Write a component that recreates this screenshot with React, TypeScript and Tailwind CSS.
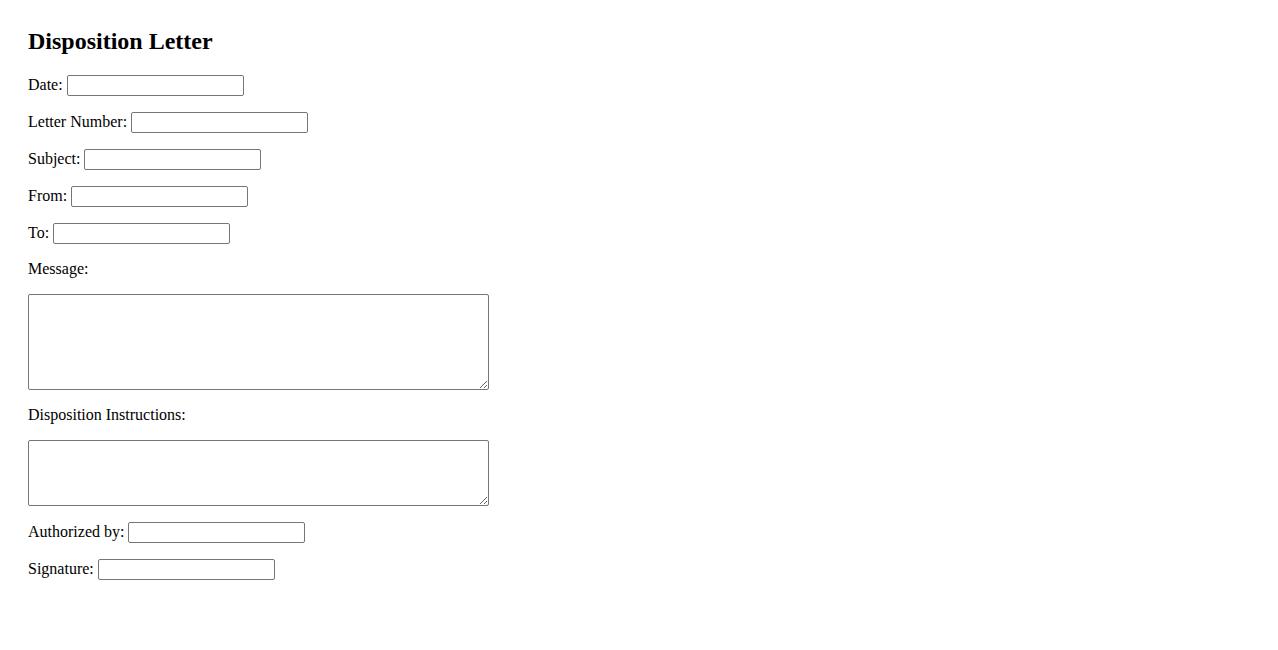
const serif = { fontFamily: '"Liberation Serif", "Times New Roman", serif' };

function Field({ label }: { label: string }) {
  return (
    <div className="flex h-[21px] items-center gap-[4px] text-[16px] text-black">
      <span className="pb-[2px] leading-[18px]">{label}</span>
      <input
        type="text"
        className="h-[21px] w-[177px] rounded-[2px] border border-[#767676] bg-white px-[2px] text-[13px] outline-none"
      />
    </div>
  );
}

function AreaField({ label, height }: { label: string; height: string }) {
  return (
    <>
      <div className="h-[18px] text-[16px] leading-[18px] text-black">{label}</div>
      <textarea
        className={`block w-[461px] ${height} rounded-[2px] border border-[#767676] bg-white p-[2px] text-[13px] outline-none`}
      />
    </>
  );
}

export default function App() {
  return (
    <div className="min-h-screen bg-white pl-[28px] pt-[28px]" style={serif}>
      <h2 className="h-[27px] text-[24px] font-bold leading-[27px] text-black">Disposition Letter</h2>
      <div className="mt-[20px] flex flex-col gap-[16px]">
        <Field label="Date:" />
        <Field label="Letter Number:" />
        <Field label="Subject:" />
        <Field label="From:" />
        <Field label="To:" />
        <AreaField label="Message:" height="h-[96px]" />
        <AreaField label="Disposition Instructions:" height="h-[66px]" />
        <Field label="Authorized by:" />
        <Field label="Signature:" />
      </div>
    </div>
  );
}
